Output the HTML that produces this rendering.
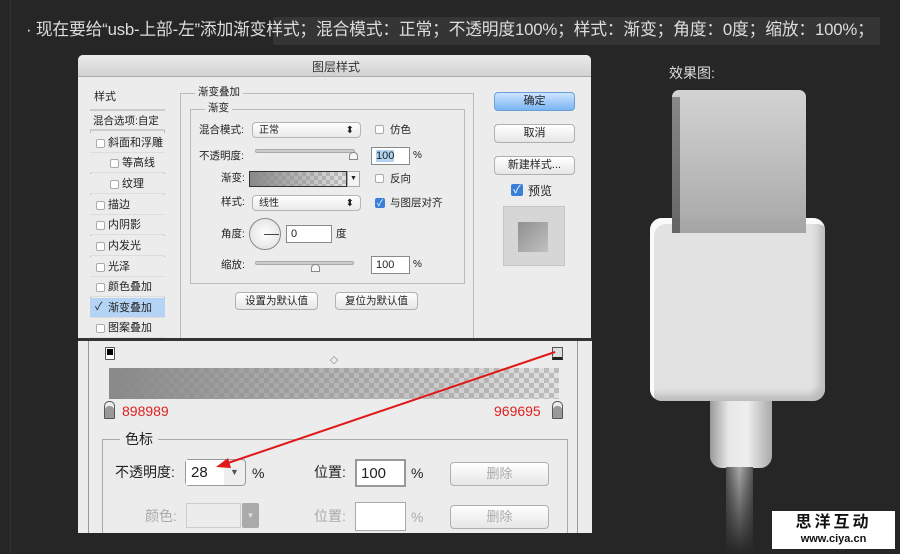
<!DOCTYPE html>
<html><head><meta charset="utf-8"><style>
*{margin:0;padding:0;box-sizing:border-box}
body{width:900px;height:554px;background:#262626;position:relative;overflow:hidden;font-family:"Liberation Sans","Noto Sans CJK SC",sans-serif;font-size:11px;color:#222}
.a{position:absolute}
.t{position:absolute;white-space:nowrap;line-height:1}
.cb{position:absolute;width:9px;height:9px;border:1px solid #aaa;background:#fff;border-radius:2px}
.sel{position:absolute;border:1px solid #b5b5b5;border-radius:4px;background:linear-gradient(#fff,#eaeaea);font-size:10px;padding:3px 6px;line-height:1}
.inp{position:absolute;border:1px solid #8a8a8a;background:#fff;font-size:11px;padding:2px 4px;line-height:1.2}
.btn{position:absolute;border:1px solid #b0b0b0;border-radius:4px;background:linear-gradient(#fff,#e6e6e6);text-align:center;font-size:11px}
.li{position:absolute;left:90px;width:75px;height:20px;border-bottom:1px solid #ddd;font-size:11px;line-height:20px;background:#ececec}
.chk{background:repeating-conic-gradient(#ccc 0 25%,#fff 0 50%) 0 0/8px 8px}
</style></head><body>
<div class="a" style="left:10px;top:0;width:1px;height:554px;background:#333"></div>
<div class="a" style="left:273px;top:17px;width:607px;height:28px;background:#353535;border-radius:2px"></div>
<div class="t" style="left:26px;top:22px;font-size:16.8px;color:#ddd;letter-spacing:-0.2px">· 现在要给“usb-上部-左”添加渐变样式；混合模式：正常；不透明度100%；样式：渐变；角度：0度；缩放：100%；</div>

<!-- dialog -->
<div class="a" style="left:78px;top:55px;width:513px;height:284px;background:#ececec;border-radius:5px 5px 0 0"></div>
<div class="a" style="left:78px;top:55px;width:513px;height:22px;background:linear-gradient(#ebebeb,#d2d2d2);border-radius:5px 5px 0 0;border-bottom:1px solid #aaa"></div>
<div class="t" style="left:312px;top:61px;font-size:12px;color:#333">图层样式</div>

<div class="a" style="left:90px;top:90px;width:75px;height:250px;border:1px solid #b9b9b9;background:#ececec"></div>
<div class="li" style="top:90px;height:21px;border-bottom:2px solid #ccc;line-height:14px;padding-left:4px">样式</div>
<div class="li" style="top:111px;border-bottom:2px solid #ccc;padding-left:3px;font-size:10.5px">混合选项:自定</div>
<div class="li" style="top:133px;padding-left:18px">斜面和浮雕</div><div class="cb" style="left:96px;top:139px"></div>
<div class="li" style="top:153px;padding-left:32px">等高线</div><div class="cb" style="left:110px;top:159px"></div>
<div class="li" style="top:174px;padding-left:32px">纹理</div><div class="cb" style="left:110px;top:180px"></div>
<div class="li" style="top:195px;padding-left:18px">描边</div><div class="cb" style="left:96px;top:201px"></div>
<div class="li" style="top:215px;padding-left:18px">内阴影</div><div class="cb" style="left:96px;top:221px"></div>
<div class="li" style="top:236px;padding-left:18px">内发光</div><div class="cb" style="left:96px;top:242px"></div>
<div class="li" style="top:257px;padding-left:18px">光泽</div><div class="cb" style="left:96px;top:263px"></div>
<div class="li" style="top:277px;padding-left:18px">颜色叠加</div><div class="cb" style="left:96px;top:283px"></div>
<div class="li" style="top:298px;padding-left:18px;background:#b5d4f5">渐变叠加</div><div class="t" style="left:95px;top:302px;font-size:11px">✓</div>
<div class="li" style="top:318px;padding-left:18px">图案叠加</div><div class="cb" style="left:96px;top:324px"></div>

<div class="a" style="left:180px;top:93px;width:294px;height:250px;border:1px solid #bbb"></div>
<div class="t" style="left:195px;top:87px;background:#ececec;padding:0 3px;font-size:10.5px">渐变叠加</div>
<div class="a" style="left:190px;top:109px;width:275px;height:175px;border:1px solid #bbb"></div>
<div class="t" style="left:205px;top:103px;background:#ececec;padding:0 3px;font-size:10.5px">渐变</div>

<div class="t" style="left:199px;top:125px;font-size:10.5px">混合模式:</div>
<div class="sel" style="left:252px;top:122px;width:109px;height:16px">正常<span style="float:right">⬍</span></div>
<div class="cb" style="left:375px;top:125px"></div><div class="t" style="left:390px;top:125px;font-size:10.5px">仿色</div>
<div class="t" style="left:199px;top:151px;font-size:10.5px">不透明度:</div>
<div class="a" style="left:255px;top:149px;width:100px;height:4px;background:#ccc;border-radius:2px;border:1px solid #aaa"></div>
<div class="a" style="left:349px;top:152px;width:9px;height:8px;background:#f6f6f6;border:1px solid #888;border-radius:4px 4px 0 0"></div>
<div class="inp" style="left:371px;top:147px;width:39px;height:18px"><span style="background:#b3d3f3">100</span></div>
<div class="t" style="left:413px;top:151px;font-size:10px">%</div>
<div class="t" style="left:221px;top:173px;font-size:10.5px">渐变:</div>
<div class="a chk" style="left:249px;top:171px;width:98px;height:16px;border:1px solid #333"><div style="width:100%;height:100%;background:linear-gradient(90deg,#898989,rgba(150,150,149,.28))"></div></div>
<div class="a" style="left:347px;top:171px;width:13px;height:16px;border:1px solid #aaa;background:#f4f4f4;font-size:7px;text-align:center;line-height:14px">▼</div>
<div class="cb" style="left:375px;top:174px"></div><div class="t" style="left:390px;top:174px;font-size:10.5px">反向</div>
<div class="t" style="left:221px;top:197px;font-size:10.5px">样式:</div>
<div class="sel" style="left:252px;top:195px;width:109px;height:16px">线性<span style="float:right">⬍</span></div>
<div class="a" style="left:375px;top:198px;width:10px;height:10px;background:#3a7fd8;border-radius:2px;color:#fff;font-size:9px;line-height:10px;text-align:center">✓</div>
<div class="t" style="left:390px;top:198px;font-size:10.5px">与图层对齐</div>
<div class="t" style="left:221px;top:229px;font-size:10.5px">角度:</div>
<div class="a" style="left:249px;top:218px;width:32px;height:32px;border:1px solid #888;border-radius:50%;background:radial-gradient(#fff,#ddd)"></div>
<div class="a" style="left:264px;top:234px;width:15px;height:1px;background:#444"></div>
<div class="inp" style="left:286px;top:225px;width:46px;height:18px">0</div>
<div class="t" style="left:336px;top:229px;font-size:10.5px">度</div>
<div class="t" style="left:221px;top:260px;font-size:10.5px">缩放:</div>
<div class="a" style="left:255px;top:261px;width:99px;height:4px;background:#ccc;border-radius:2px;border:1px solid #aaa"></div>
<div class="a" style="left:311px;top:264px;width:9px;height:8px;background:#f6f6f6;border:1px solid #888;border-radius:4px 4px 0 0"></div>
<div class="inp" style="left:371px;top:256px;width:39px;height:18px">100</div>
<div class="t" style="left:413px;top:260px;font-size:10px">%</div>
<div class="btn" style="left:235px;top:292px;width:83px;height:18px;line-height:16px;font-size:10.5px">设置为默认值</div>
<div class="btn" style="left:335px;top:292px;width:83px;height:18px;line-height:16px;font-size:10.5px">复位为默认值</div>

<div class="btn" style="left:494px;top:92px;width:81px;height:19px;line-height:17px;background:linear-gradient(#cfe5ff,#79b4f3);border-color:#6a9fd8">确定</div>
<div class="btn" style="left:494px;top:124px;width:81px;height:19px;line-height:17px">取消</div>
<div class="btn" style="left:494px;top:156px;width:81px;height:19px;line-height:17px">新建样式...</div>
<div class="a" style="left:511px;top:184px;width:12px;height:12px;background:#3a7fd8;border-radius:2px;color:#fff;font-size:11px;line-height:12px;text-align:center">✓</div>
<div class="t" style="left:528px;top:185px;font-size:12px">预览</div>
<div class="a" style="left:503px;top:206px;width:62px;height:60px;background:#d6d6d6;border:1px solid #c4c4c4"></div>
<div class="a" style="left:518px;top:222px;width:30px;height:30px;background:linear-gradient(135deg,#909090,#c0c0c0)"></div>

<div class="a" style="left:78px;top:338px;width:514px;height:3px;background:#333"></div>
<!-- bottom panel -->
<div class="a" style="left:78px;top:341px;width:514px;height:192px;background:#ececec;overflow:hidden">
<div class="a" style="left:24px;top:98px;width:466px;height:120px;border:1px solid #aaa"></div>
</div>
<div class="a" style="left:88px;top:341px;width:1px;height:192px;background:#999"></div>
<div class="a" style="left:577px;top:341px;width:1px;height:192px;background:#999"></div>
<div class="a" style="left:105px;top:347px;width:10px;height:13px;background:#fff;border:1px solid #555;border-radius:1px"><div style="margin:1px;width:6px;height:6px;background:#000"></div></div>
<div class="a" style="left:552px;top:347px;width:11px;height:13px;background:#ddd;border:1px solid #555;border-bottom:3px solid #222"></div>
<div class="t" style="left:330px;top:357px;font-size:8px">◇</div>
<div class="a chk" style="left:109px;top:368px;width:450px;height:31px;background-size:10px 10px"><div style="width:100%;height:100%;background:linear-gradient(90deg,#898989,rgba(150,150,149,.28))"></div></div>
<div class="a" style="left:104px;top:401px;width:11px;height:18px;background:#999;border:1px solid #555;border-radius:5px 5px 1px 1px;box-shadow:inset 0 4px 0 #eee"></div>
<div class="a" style="left:552px;top:401px;width:11px;height:18px;background:#999;border:1px solid #555;border-radius:5px 5px 1px 1px;box-shadow:inset 0 4px 0 #eee"></div>
<div class="t" style="left:122px;top:404px;font-size:14px;color:#e02020">898989</div>
<div class="t" style="left:494px;top:404px;font-size:14px;color:#e02020">969695</div>
<div class="t" style="left:120px;top:432px;font-size:14px;background:#ececec;padding:0 5px">色标</div>
<div class="t" style="left:115px;top:465px;font-size:14px">不透明度:</div>
<div class="a" style="left:185px;top:459px;width:61px;height:27px;border:1px solid #999;border-radius:4px;background:#eee"><div style="width:38px;height:25px;background:#fff;font-size:15px;padding:4px 0 0 5px">28</div><span class="t" style="left:44px;top:8px;font-size:9px;color:#555">▼</span></div>
<div class="t" style="left:252px;top:466px;font-size:14px">%</div>
<div class="t" style="left:314px;top:465px;font-size:14px">位置:</div>
<div class="inp" style="left:355px;top:459px;width:51px;height:28px;font-size:15px;padding-top:4px;border:2px solid #999">100</div>
<div class="t" style="left:411px;top:466px;font-size:14px">%</div>
<div class="btn" style="left:450px;top:462px;width:99px;height:24px;line-height:22px;color:#aaa;font-size:13px">删除</div>
<div class="t" style="left:145px;top:509px;font-size:14px;color:#aaa">颜色:</div>
<div class="a" style="left:186px;top:503px;width:55px;height:25px;border:1px solid #ccc;background:#ececec"></div>
<div class="a" style="left:242px;top:503px;width:17px;height:25px;background:#aaa;border-radius:2px;color:#ddd;font-size:8px;text-align:center;line-height:25px">▼</div>
<div class="t" style="left:314px;top:509px;font-size:14px;color:#aaa">位置:</div>
<div class="a" style="left:355px;top:502px;width:51px;height:29px;background:#fff;border:1px solid #aaa"></div>
<div class="t" style="left:411px;top:510px;font-size:14px;color:#aaa">%</div>
<div class="btn" style="left:450px;top:505px;width:99px;height:24px;line-height:22px;color:#aaa;font-size:13px">删除</div>
<svg class="a" style="left:0;top:0" width="900" height="554"><line x1="555" y1="352" x2="225" y2="464" stroke="#e01818" stroke-width="2"/><polygon points="216,467 228,458 231,468" fill="#e01818"/></svg>

<!-- usb -->
<div class="t" style="left:669px;top:66px;font-size:14px;color:#ddd">效果图:</div>
<div class="a" style="left:672px;top:90px;width:134px;height:143px;border-radius:7px 7px 0 0;background:linear-gradient(#d3d3d3,#a8a8a8)"></div>
<div class="a" style="left:672px;top:97px;width:8px;height:136px;background:linear-gradient(#888,#666)"></div>
<div class="a" style="left:710px;top:400px;width:62px;height:68px;border-radius:0 0 12px 12px;background:linear-gradient(90deg,#999,#e8e8e8 30%,#eee 60%,#aaa)"></div>
<div class="a" style="left:726px;top:467px;width:27px;height:87px;background:linear-gradient(90deg,#555,#aaa 50%,#555);-webkit-mask:linear-gradient(#000,transparent);mask:linear-gradient(#000,transparent)"></div>
<div class="a" style="left:650px;top:218px;width:175px;height:183px;border-radius:12px;background:#e2e2e2;box-shadow:inset 4px 6px 0 #fafafa,inset -6px -6px 8px #bbb"></div>
<div class="a" style="left:672px;top:218px;width:134px;height:15px;background:linear-gradient(#aaa,#a5a5a5)"></div>
<div class="a" style="left:672px;top:218px;width:8px;height:15px;background:#666"></div>
<div class="a" style="left:772px;top:511px;width:123px;height:38px;background:#fff;text-align:center">
<div style="font-size:16px;font-weight:bold;color:#111;letter-spacing:3px;line-height:20px;padding-top:2px">思洋互动</div>
<div style="font-size:11px;font-weight:bold;color:#111;line-height:12px">www.ciya.cn</div></div>
</body></html>
